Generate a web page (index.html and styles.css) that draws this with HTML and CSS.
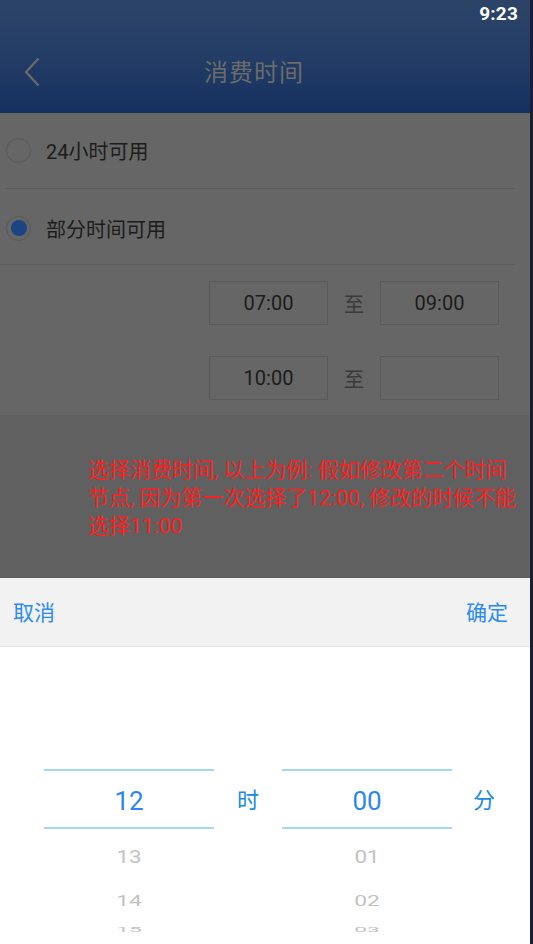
FILE: index.html
```html
<!DOCTYPE html>
<html lang="zh-CN">
<head>
<meta charset="utf-8">
<title>消费时间</title>
<link rel="stylesheet" href="styles.css">
</head>
<body>
<div class="screen">
  <div class="app">
    <header class="topbar">
      <div class="status"><span class="clock">9:23</span></div>
      <div class="navbar">
        <svg class="back" width="20" height="32" viewBox="0 0 20 32"><path d="M15 3 L3 16 L15 29" fill="none" stroke="#6b6b6b" stroke-width="2.2" stroke-linecap="round" stroke-linejoin="round"/></svg>
        <h1 class="title">消费时间</h1>
      </div>
    </header>

    <section class="form">
      <div class="option option-first">
        <span class="radio"></span>
        <span class="label">24小时可用</span>
      </div>
      <div class="option option-second">
        <span class="radio radio-on"><span class="dot"></span></span>
        <span class="label">部分时间可用</span>
      </div>
      <div class="ranges">
        <div class="range">
          <div class="tbox">07:00</div>
          <span class="to">至</span>
          <div class="tbox">09:00</div>
        </div>
        <div class="range">
          <div class="tbox">10:00</div>
          <span class="to">至</span>
          <div class="tbox"></div>
        </div>
      </div>
    </section>

    <section class="note">
      <p>选择消费时间, 以上为例: 假如修改第二个时间<br>节点, 因为第一次选择了12:00, 修改的时候不能<br>选择11:00</p>
    </section>

    <section class="sheet">
      <div class="sheet-bar">
        <span class="act">取消</span>
        <span class="act">确定</span>
      </div>
      <div class="picker">
        <div class="wheel wheel-h">
          <div class="cell cell-sel">12</div>
          <div class="cell cell-1">13</div>
          <div class="cell cell-2">14</div>
          <div class="cell cell-3">15</div>
        </div>
        <div class="unit">时</div>
        <div class="wheel wheel-m">
          <div class="cell cell-sel">00</div>
          <div class="cell cell-1">01</div>
          <div class="cell cell-2">02</div>
          <div class="cell cell-3">03</div>
        </div>
        <div class="unit unit-m">分</div>
      </div>
    </section>
  </div>
  <div class="edge"></div>
</div>
</body>
</html>
```

FILE: styles.css
```css
* { box-sizing: border-box; margin: 0; padding: 0; }
html, body { width: 533px; height: 944px; overflow: hidden; }
body { font-family: Roboto, "Noto Sans CJK SC", sans-serif; background: #1b1d36; }

.screen { display: flex; width: 533px; height: 944px; }
.app { width: 530px; height: 944px; display: flex; flex-direction: column; }
.edge { width: 3px; background: #1b1d36; }

/* header */
.topbar {
  height: 113px;
  background: linear-gradient(180deg, #2d4468 0%, #233d66 50%, #15305f 100%);
  display: flex; flex-direction: column;
}
.status { height: 26px; display: flex; justify-content: flex-end; align-items: center; padding-right: 12px; }
.clock { color: #fff; font-weight: 700; font-size: 19px; letter-spacing: 0.2px; }
.navbar { position: relative; height: 87px; display: flex; align-items: center; justify-content: center; padding-bottom: 2px; }
.back { position: absolute; left: 23px; top: 30px; }
.title { font-weight: 400; font-size: 24px; color: #6b6b6b; letter-spacing: 1px; margin-right: 22px; margin-top: 4px; }

/* form under the dim */
.form { height: 302px; background: #666666; display: flex; flex-direction: column; }
.option { height: 76px; display: flex; align-items: center; padding-left: 6px; }
.option-first { background: linear-gradient(#5c5c5c, #5c5c5c) no-repeat 5px 100% / 510px 1px; padding-bottom: 2px; }
.option-second { background: linear-gradient(#5c5c5c, #5c5c5c) no-repeat 0 100% / 515px 1px; padding-top: 2px; }
.radio { width: 25px; height: 25px; border: 1.5px solid #585858; border-radius: 50%; display: flex; align-items: center; justify-content: center; }
.dot { width: 16px; height: 16px; border-radius: 50%; background: #1a4482; }
.label { margin-left: 15px; font-size: 20px; color: #1c1c1c; }

.ranges { flex: 1; display: flex; flex-direction: column; gap: 31px; padding: 16px 31px 0 0; }
.range { display: flex; justify-content: flex-end; align-items: center; gap: 16px; }
.tbox { width: 119px; height: 44px; border: 1.5px solid #5a5a5a; display: flex; align-items: center; justify-content: center; font-size: 20px; color: #1c1c1c; }
.to { width: 20px; font-size: 20px; color: #3a3a3a; text-align: center; }

/* note */
.note { height: 163px; background: #606060; padding: 41px 0 0 88px; }
.note p { font-family: Roboto, "Noto Sans CJK SC", sans-serif; font-size: 21px; line-height: 28px; color: #ff1e1e; white-space: nowrap; }

/* bottom sheet */
.sheet { flex: 1; display: flex; flex-direction: column; background: #fff; }
.sheet-bar { height: 69px; background: #f2f2f2; border-bottom: 1px solid #e2e2e2; display: flex; justify-content: space-between; align-items: center; padding: 0 22px 2px 13px; }
.act { font-family: "Noto Sans CJK SC", sans-serif; font-size: 21px; color: #2c8af3; }

.picker { height: 286px; display: flex; padding-left: 44px; padding-top: 122px; overflow: hidden; }
.wheel { display: flex; flex-direction: column; }
.wheel-h { width: 170px; }
.wheel-m { width: 170px; }
.unit { width: 68px; height: 60px; display: flex; align-items: center; justify-content: center; font-family: "Noto Sans CJK SC", sans-serif; font-size: 22px; color: #1a8be0; padding-bottom: 2px; }
.unit-m { width: 64px; }
.cell { display: flex; align-items: center; justify-content: center; color: #c2c2c2; flex: none; }
.cell-sel { height: 60px; border-top: 2px solid #a3daf2; border-bottom: 2px solid #a3daf2; font-size: 26px; color: #2b86f1; padding-top: 4px; }
.cell-1 { height: 54px; font-size: 19px; transform: scaleX(1.18); }
.cell-2 { height: 36px; font-size: 19px; transform: scale(1.2, 0.75); }
.cell-3 { height: 20px; font-size: 19px; transform: scale(1.2, 0.35); align-items: flex-start; }
```
